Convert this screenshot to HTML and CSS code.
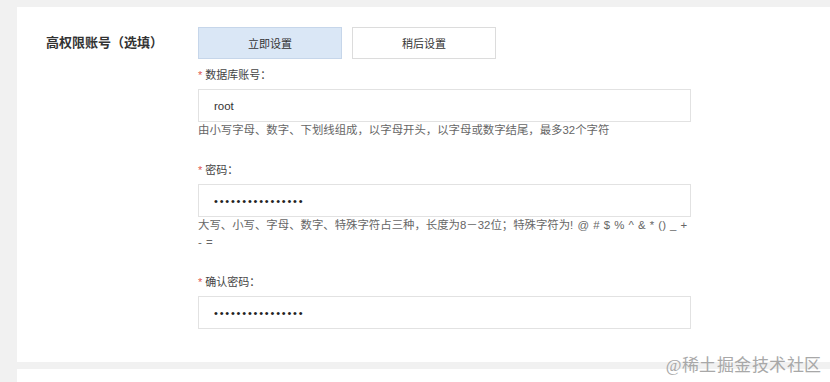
FILE: index.html
```html
<!DOCTYPE html>
<html lang="zh-CN">
<head>
<meta charset="utf-8">
<link rel="stylesheet" href="styles.css">
</head>
<body>
<div class="page">
  <section class="card">
    <div class="row">
      <div class="row-label">高权限账号（选填）</div>
      <div class="row-body">
        <div class="btns">
          <button class="btn btn-active">立即设置</button>
          <button class="btn">稍后设置</button>
        </div>
        <div class="field first">
          <div class="field-label"><span class="req">*</span> 数据库账号：</div>
          <input class="input" type="text" value="root">
          <div class="hint">由小写字母、数字、下划线组成，以字母开头，以字母或数字结尾，最多32个字符</div>
        </div>
        <div class="field">
          <div class="field-label"><span class="req">*</span> 密码：</div>
          <input class="input pw" type="password" value="aaaaaaaaaaaaaaaa">
          <div class="hint hint-ascii">大写、小写、字母、数字、特殊字符占三种，长度为8－32位；特殊字符为! @ # $ % ^ &amp; * () _ +<br>- =</div>
        </div>
        <div class="field">
          <div class="field-label"><span class="req">*</span> 确认密码：</div>
          <input class="input pw" type="password" value="aaaaaaaaaaaaaaaa">
        </div>
      </div>
    </div>
  </section>
  <section class="card card-next"></section>
  <div class="watermark">@稀土掘金技术社区</div>
</div>
</body>
</html>
```
FILE: styles.css
```css
html, body {
  margin: 0;
  padding: 0;
  height: 100%;
  overflow: hidden;
  background: #f1f1f1;
}
body {
  font-family: "Liberation Sans", "Noto Sans CJK SC", sans-serif;
  color: #333;
}
.page {
  padding: 7px 0 0 17px;
  position: relative;
  height: 100%;
  box-sizing: border-box;
}
.card {
  background: #fff;
  margin-right: -20px;
  padding: 20px 0 33px 29px;
}
.card-next {
  margin-top: 7px;
  height: 40px;
  padding: 0;
}
.row {
  display: flex;
}
.row-label {
  width: 152px;
  flex: none;
  font-size: 13px;
  font-weight: bold;
  color: #333;
  line-height: 32px;
}
.row-body {
  width: 493px;
}
.btns {
  display: flex;
  gap: 10px;
}
.btn {
  width: 144px;
  height: 32px;
  border: 1px solid #dcdcdc;
  background: #fff;
  font-family: inherit;
  font-size: 11px;
  color: #333;
  padding: 0;
  margin: 0;
}
.btn-active {
  background: #dae7f6;
  border-color: #c6d6ea;
}
.field {
  margin-top: 23px;
}
.field.first {
  margin-top: 8px;
}
.field-label {
  font-size: 11px;
  line-height: 16px;
  color: #444;
  margin-bottom: 6px;
}
.req {
  color: #e0564f;
}
.input {
  display: block;
  box-sizing: border-box;
  width: 493px;
  height: 33px;
  border: 1px solid #e2e2e2;
  padding: 0 15px;
  margin: 0;
  font-family: inherit;
  font-size: 11.5px;
  color: #333;
  outline: none;
}
.input.pw {
  font-size: 11px;
  letter-spacing: 1.8px;
  color: #222;
}
.hint {
  font-size: 11.4px;
  line-height: 17px;
  color: #666;
}
.hint-ascii {
  word-spacing: 1px;
}
.watermark {
  position: absolute;
  right: 8px;
  bottom: 6px;
  font-family: "Liberation Serif", serif;
  font-size: 17px;
  color: #a8a8a8;
  letter-spacing: 0.5px;
}
```
